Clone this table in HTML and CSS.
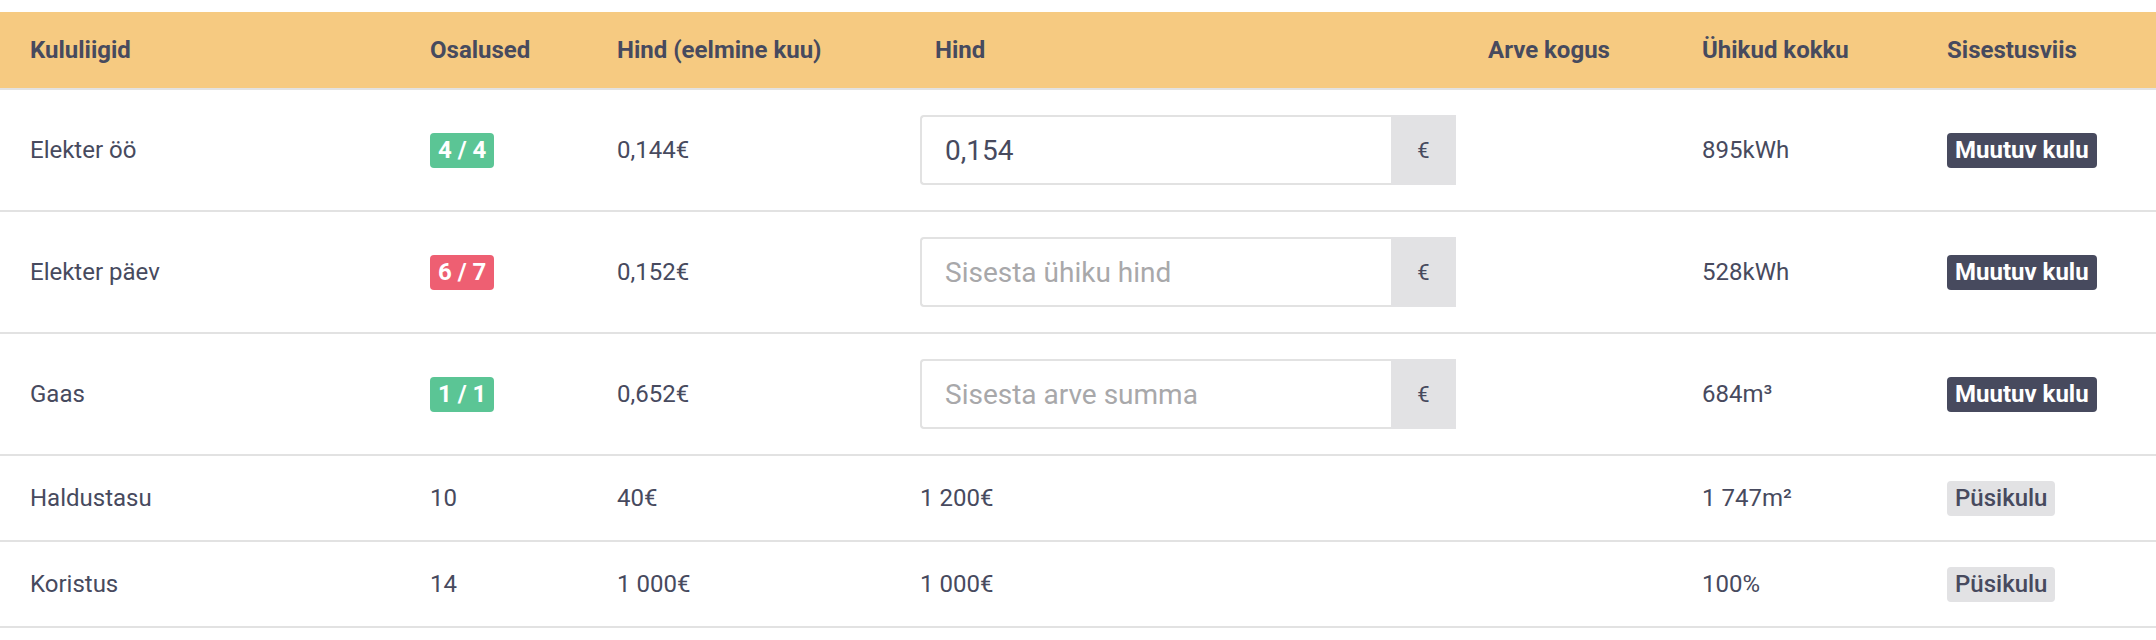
FILE: index.html
```html
<!DOCTYPE html>
<html lang="et">
<head>
<meta charset="utf-8">
<title>Kulud</title>
<link rel="stylesheet" href="styles.css">
</head>
<body>
<div class="page">
  <div class="table">
    <div class="row head">
      <div class="cell">Kululiigid</div>
      <div class="cell">Osalused</div>
      <div class="cell">Hind (eelmine kuu)</div>
      <div class="cell cell-hind">Hind</div>
      <div class="cell">Arve kogus</div>
      <div class="cell">Ühikud kokku</div>
      <div class="cell">Sisestusviis</div>
    </div>
    <div class="row tall">
      <div class="cell">Elekter öö</div>
      <div class="cell"><span class="badge green">4 / 4</span></div>
      <div class="cell">0,144€</div>
      <div class="cell"><div class="input-group"><input class="input" type="text" value="0,154"><span class="addon">€</span></div></div>
      <div class="cell"></div>
      <div class="cell">895kWh</div>
      <div class="cell"><span class="badge dark">Muutuv kulu</span></div>
    </div>
    <div class="row tall">
      <div class="cell">Elekter päev</div>
      <div class="cell"><span class="badge red">6 / 7</span></div>
      <div class="cell">0,152€</div>
      <div class="cell"><div class="input-group"><input class="input" type="text" placeholder="Sisesta ühiku hind"><span class="addon">€</span></div></div>
      <div class="cell"></div>
      <div class="cell">528kWh</div>
      <div class="cell"><span class="badge dark">Muutuv kulu</span></div>
    </div>
    <div class="row tall">
      <div class="cell">Gaas</div>
      <div class="cell"><span class="badge green">1 / 1</span></div>
      <div class="cell">0,652€</div>
      <div class="cell"><div class="input-group"><input class="input" type="text" placeholder="Sisesta arve summa"><span class="addon">€</span></div></div>
      <div class="cell"></div>
      <div class="cell">684m³</div>
      <div class="cell"><span class="badge dark">Muutuv kulu</span></div>
    </div>
    <div class="row short">
      <div class="cell">Haldustasu</div>
      <div class="cell">10</div>
      <div class="cell">40€</div>
      <div class="cell">1 200€</div>
      <div class="cell"></div>
      <div class="cell">1 747m²</div>
      <div class="cell"><span class="badge light">Püsikulu</span></div>
    </div>
    <div class="row short">
      <div class="cell">Koristus</div>
      <div class="cell">14</div>
      <div class="cell">1 000€</div>
      <div class="cell">1 000€</div>
      <div class="cell"></div>
      <div class="cell">100%</div>
      <div class="cell"><span class="badge light">Püsikulu</span></div>
    </div>
  </div>
</div>
</body>
</html>
```

FILE: styles.css
```css
html, body {
  margin: 0;
  padding: 0;
  background: #ffffff;
}

body {
  font-family: Roboto, "Liberation Sans", Arial, sans-serif;
  font-size: 24px;
  color: #474a5e;
}

.page {
  padding-top: 12px;
}

.row {
  display: grid;
  grid-template-columns: 400px 187px 303px 568px 214px 245px 1fr;
  align-items: center;
  border-bottom: 2px solid #e2e2e2;
}

.cell {
  padding-left: 30px;
  white-space: nowrap;
}

.head {
  height: 76px;
  background: #f6ca81;
  font-weight: 700;
}

.head .cell-hind {
  padding-left: 45px;
}

.tall {
  height: 120px;
}

.short {
  height: 84px;
}

.badge {
  display: inline-block;
  height: 35px;
  line-height: 35px;
  padding: 0 8px;
  border-radius: 4px;
  font-weight: 700;
  color: #ffffff;
  vertical-align: middle;
}

.badge.green {
  background: #5bc595;
}

.badge.red {
  background: #ee5f72;
}

.badge.dark {
  background: #474a5e;
}

.badge.light {
  background: #e2e2e4;
  color: #474a5e;
  font-weight: 500;
}

.input-group {
  display: flex;
  width: 536px;
  height: 70px;
}

.input {
  flex: 1;
  min-width: 0;
  box-sizing: border-box;
  height: 70px;
  margin: 0;
  padding: 0 22px 0 23px;
  border: 2px solid #e2e2e2;
  border-right: none;
  border-radius: 4px 0 0 4px;
  font-family: Roboto, "Liberation Sans", Arial, sans-serif;
  font-size: 28px;
  color: #474a5e;
  background: #ffffff;
  outline: none;
}

.input::placeholder {
  color: #a8a8aa;
}

.addon {
  width: 65px;
  display: flex;
  align-items: center;
  justify-content: center;
  background: #e2e2e4;
  font-size: 22px;
  color: #474a5e;
}
```
